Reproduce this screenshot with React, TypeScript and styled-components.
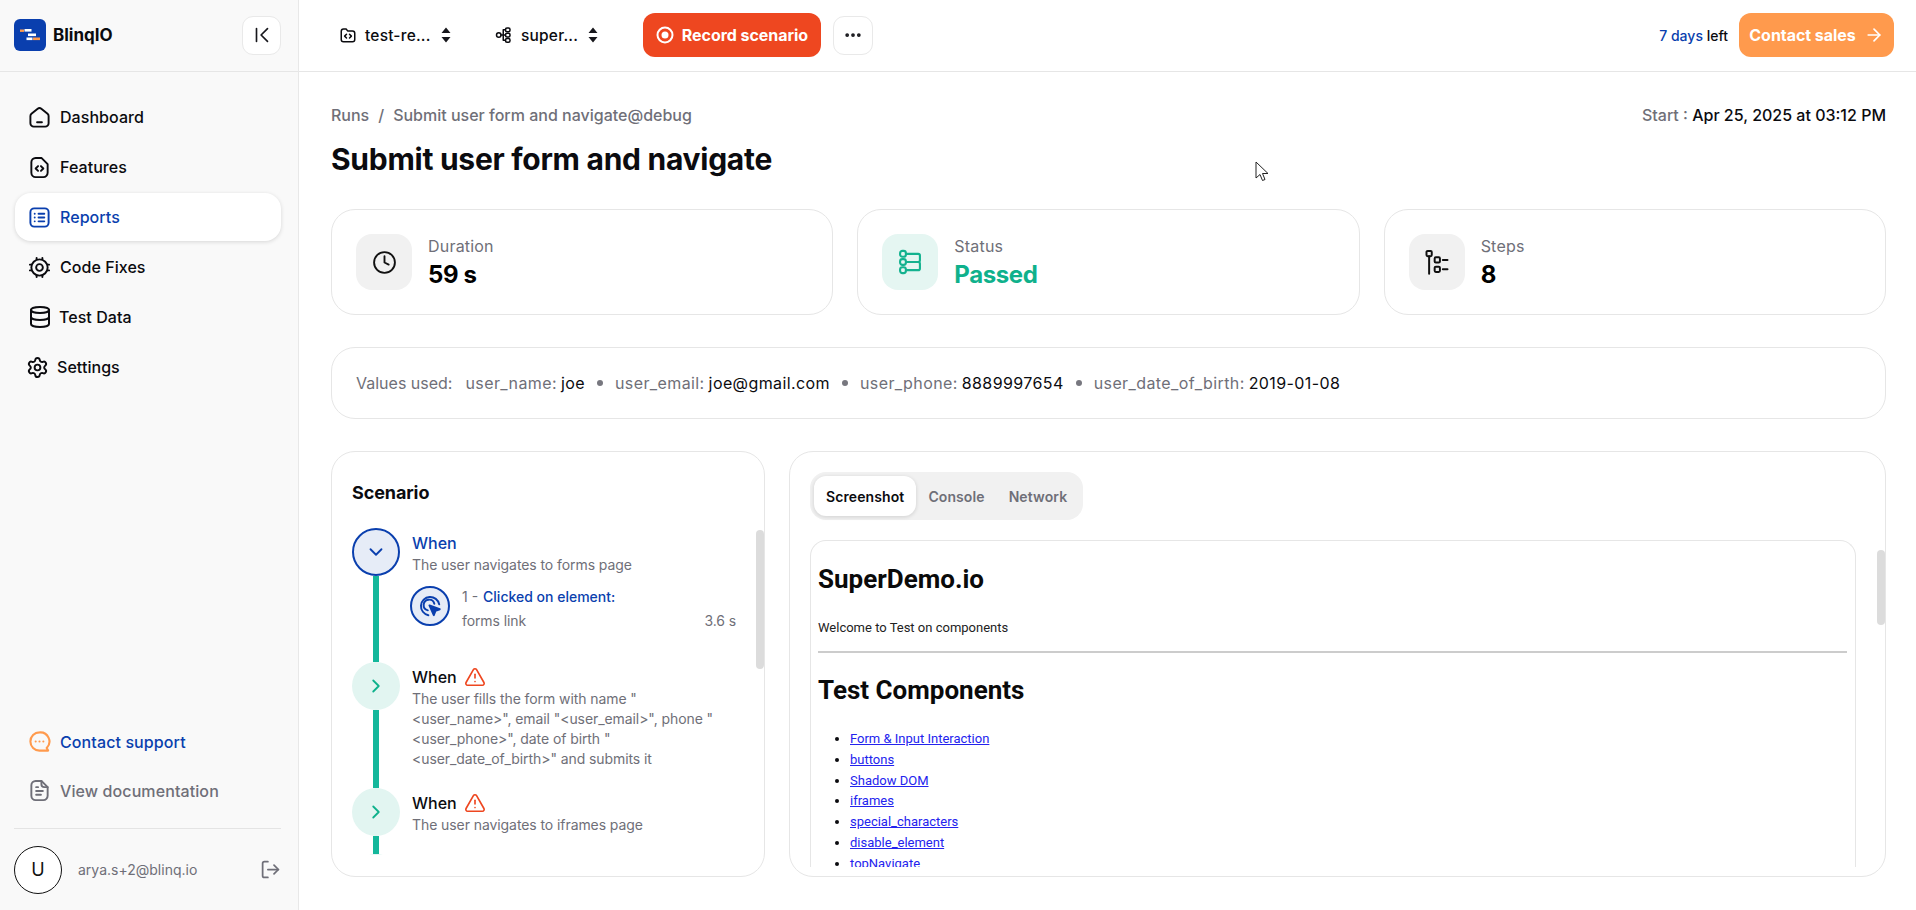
import * as React from 'react';
import styled, { createGlobalStyle } from 'styled-components';
import {
    ArrowRight,
    ChevronDown,
    ChevronRight,
    Clock,
    Database,
    Ellipsis,
    LogOut,
    Settings,
    TriangleAlert,
} from 'lucide-react';

const GlobalStyle = createGlobalStyle`
    html, body {
        margin: 0;
        padding: 0;
        height: 100%;
        overflow: hidden;
        background: #ffffff;
        font-family: Inter, "Open Sans", sans-serif;
        color: #0b0b0f;
    }
    * {
        box-sizing: border-box;
    }
`;

const Shell = styled.div`
    position: relative;
    display: grid;
    grid-template-columns: 299px 1fr;
    width: 1916px;
    height: 910px;
    overflow: hidden;
`;

const Sidebar = styled.aside`
    display: flex;
    flex-direction: column;
    height: 910px;
    background: #f9f9f9;
    border-right: 1px solid #e8e8e8;
`;

const SidebarTop = styled.div`
    display: flex;
    align-items: center;
    justify-content: space-between;
    height: 72px;
    padding: 0 17px 1px 14px;
    border-bottom: 1px solid #e6e6e6;
`;

const Brand = styled.div`
    display: flex;
    align-items: center;
    gap: 7px;
    font-size: 17px;
    font-weight: 700;
    letter-spacing: 0;
`;

const IconButton = styled.button<{ $w: number; $ml?: number }>`
    display: flex;
    align-items: center;
    justify-content: center;
    padding: 0;
    width: ${(p) => p.$w}px;
    height: 39px;
    margin-left: ${(p) => p.$ml ?? 0}px;
    background: #ffffff;
    border: 1px solid #e9e9e9;
    border-radius: 11px;
    color: #17171c;
`;

const Nav = styled.nav`
    display: flex;
    flex-direction: column;
    gap: 2px;
    padding: 21px 17px 0 15px;
`;

const NavItem = styled.div<{ $active?: boolean; $gap?: number; $inset?: number }>`
    display: flex;
    align-items: center;
    gap: ${(p) => p.$gap ?? 9}px;
    height: 48px;
    padding-left: ${(p) => p.$inset ?? 13}px;
    border-radius: 16px;
    font-size: 16px;
    font-weight: 500;
    letter-spacing: 0.05px;
    color: ${(p) => (p.$active ? '#0a3fae' : '#0b0b0f')};
    background: ${(p) => (p.$active ? '#ffffff' : 'transparent')};
    box-shadow: ${(p) => (p.$active ? '0 1px 4px rgba(0, 0, 0, 0.14)' : 'none')};
`;

const SidebarBottom = styled.div`
    margin-top: auto;
    padding: 0 17px 0 14px;
`;

const HelpLink = styled.div<{ $muted?: boolean }>`
    display: flex;
    align-items: center;
    gap: 9px;
    height: 49px;
    padding-left: 14px;
    font-size: 16px;
    font-weight: 500;
    letter-spacing: 0.1px;
    color: ${(p) => (p.$muted ? '#6f6f78' : '#0a3fae')};
`;

const UserRow = styled.div`
    display: flex;
    align-items: center;
    height: 82px;
    margin-top: 13px;
    padding-bottom: 17px;
    border-top: 1px solid #e4e4e4;
    padding-top: 17px;
    color: #6f6f78;
`;

const Avatar = styled.div`
    display: flex;
    align-items: center;
    justify-content: center;
    width: 48px;
    height: 48px;
    border: 1px solid #111111;
    border-radius: 50%;
    background: #ffffff;
    font-size: 18px;
    color: #111111;
`;

const UserMail = styled.span`
    flex: 1;
    margin-left: 16px;
    font-size: 14px;
`;

const Content = styled.div`
    display: flex;
    flex-direction: column;
    min-width: 0;
`;

const TopBar = styled.header`
    display: flex;
    align-items: center;
    height: 72px;
    padding: 0 22px 1px 40px;
    border-bottom: 1px solid #e6e6e6;
`;

const Pickers = styled.div`
    display: flex;
    gap: 43px;
    margin-right: 44px;
`;

const Picker = styled.div<{ $w: number }>`
    display: flex;
    align-items: center;
    gap: 8px;
    width: ${(p) => p.$w}px;
    font-size: 15.5px;
    font-weight: 500;
    letter-spacing: 0.2px;
`;

const PickerLabel = styled.span`
    flex: 1;
`;

const ActionButton = styled.button<{ $bg: string; $w: number }>`
    display: flex;
    align-items: center;
    justify-content: center;
    gap: 8px;
    width: ${(p) => p.$w}px;
    height: 44px;
    padding: 0;
    border: 0;
    border-radius: 12px;
    background: ${(p) => p.$bg};
    color: #ffffff;
    font-family: inherit;
    font-size: 16px;
    font-weight: 700;
    letter-spacing: -0.05px;
`;

const Trial = styled.span`
    margin-left: auto;
    margin-right: 11px;
    font-size: 14px;
    font-weight: 500;
    b {
        font-weight: 500;
        color: #0a3fae;
    }
`;

const Main = styled.main`
    display: flex;
    flex-direction: column;
    flex: 1;
    padding: 32px 30px 33px 32px;
    min-height: 0;
`;

const MetaRow = styled.div`
    display: flex;
    justify-content: space-between;
    align-items: center;
    height: 22px;
    font-size: 16px;
    font-weight: 500;
    color: #6f6f78;
    letter-spacing: 0;
`;

const Slash = styled.span`
    margin: 0 9px;
`;

const StartValue = styled.span`
    color: #0b0b0f;
`;

const Title = styled.h1`
    margin: 13px 0 0;
    height: 40px;
    font-size: 30px;
    line-height: 40px;
    font-weight: 700;
    letter-spacing: -0.27px;
`;

const Stats = styled.section`
    display: grid;
    grid-template-columns: repeat(3, 1fr);
    gap: 24px;
    margin-top: 30px;
`;

const Card = styled.div`
    background: #ffffff;
    border: 1px solid #e6e6e6;
    border-radius: 24px;
`;

const StatCard = styled(Card)`
    display: flex;
    align-items: center;
    gap: 16px;
    height: 106px;
    padding: 0 24px;
`;

const StatIcon = styled.div<{ $tint?: boolean }>`
    display: flex;
    align-items: center;
    justify-content: center;
    width: 56px;
    height: 56px;
    border-radius: 16px;
    background: ${(p) => (p.$tint ? '#e5f6f2' : '#f1f1f1')};
    color: ${(p) => (p.$tint ? '#13b28f' : '#111111')};
`;

const StatText = styled.div`
    display: flex;
    flex-direction: column;
    gap: 4px;
    padding-top: 1px;
`;

const StatLabel = styled.span`
    font-size: 16px;
    line-height: 20px;
    color: #6f6f78;
    letter-spacing: 0.2px;
`;

const StatValue = styled.span<{ $ok?: boolean }>`
    font-size: 24px;
    line-height: 30px;
    font-weight: 700;
    letter-spacing: -0.4px;
    color: ${(p) => (p.$ok ? '#0fb18c' : '#000000')};
`;

const ValuesCard = styled(Card)`
    display: flex;
    align-items: center;
    height: 72px;
    margin-top: 32px;
    padding: 0 24px;
    font-size: 16px;
    font-weight: 400;
    color: #6f6f78;
    letter-spacing: 0.4px;
`;

const ValuesLead = styled.span`
    margin-right: 13px;
    letter-spacing: 0;
`;

const ValueKey = styled.span`
    margin-right: 4px;
`;

const ValueText = styled.span`
    color: #0b0b0f;
`;

const Dot = styled.i`
    width: 6px;
    height: 6px;
    margin: 0 12px;
    border-radius: 50%;
    background: #77777f;
`;

const Panels = styled.section`
    display: grid;
    grid-template-columns: 434px 1fr;
    gap: 24px;
    flex: 1;
    margin-top: 32px;
    min-height: 0;
`;

const Panel = styled(Card)`
    position: relative;
    overflow: hidden;
    display: flex;
    flex-direction: column;
`;

const ScrollThumb = styled.div<{ $top: number; $h: number }>`
    position: absolute;
    right: 0;
    top: ${(p) => p.$top}px;
    width: 8px;
    height: ${(p) => p.$h}px;
    border-radius: 4px;
    background: #dcdcdc;
`;

const PanelTitle = styled.h2`
    margin: 29px 0 0 20px;
    height: 24px;
    font-size: 18px;
    line-height: 24px;
    font-weight: 700;
    letter-spacing: -0.1px;
`;

const Timeline = styled.div`
    flex: none;
    height: 327px;
    margin: 23px 0 0 20px;
    padding-right: 28px;
    overflow: hidden;
`;

const Phase = styled.div`
    display: grid;
    grid-template-columns: 48px 1fr;
    column-gap: 12px;
`;

const Rail = styled.div`
    display: flex;
    flex-direction: column;
    align-items: center;
`;

const RailLine = styled.div`
    flex: 1;
    width: 6px;
    background: #14b79b;
`;

const PhaseDot = styled.div<{ $open?: boolean }>`
    display: flex;
    align-items: center;
    justify-content: center;
    flex: none;
    width: 48px;
    height: 48px;
    border-radius: 50%;
    background: ${(p) => (p.$open ? '#e6ecf7' : '#e2f5f1')};
    border: ${(p) => (p.$open ? '2px solid #0a3fae' : '0')};
    color: ${(p) => (p.$open ? '#0a3fae' : '#0fb18c')};
`;

const PhaseBody = styled.div`
    padding: 5px 0 19px;
    min-width: 0;
`;

const PhaseHead = styled.div<{ $open?: boolean }>`
    display: flex;
    align-items: center;
    gap: 7px;
    height: 20px;
    font-size: 16px;
    font-weight: 500;
    color: ${(p) => (p.$open ? '#0a3fae' : '#0b0b0f')};
`;

const PhaseText = styled.p`
    margin: 2px 0 0;
    font-size: 14px;
    line-height: 20px;
    color: #6f6f78;
    letter-spacing: -0.08px;
`;

const Step = styled.div`
    display: grid;
    grid-template-columns: 40px 1fr;
    column-gap: 12px;
    margin: 11px 0 12px -2px;
`;

const StepBadge = styled.div`
    display: flex;
    align-items: center;
    justify-content: center;
    width: 40px;
    height: 40px;
    border-radius: 50%;
    border: 2px solid #0a3fae;
    background: #e6ecf7;
    color: #0a3fae;
`;

const StepTitle = styled.div`
    padding-top: 1px;
    font-size: 14px;
    line-height: 20px;
    color: #0a3fae;
    font-weight: 500;
    span {
        color: #6f6f78;
        font-weight: 400;
        margin-right: 5px;
    }
`;

const StepMeta = styled.div`
    display: flex;
    justify-content: space-between;
    margin-top: 4px;
    font-size: 14px;
    line-height: 20px;
    color: #6f6f78;
    letter-spacing: -0.1px;
`;

const Tabs = styled.div`
    display: flex;
    align-self: flex-start;
    height: 48px;
    margin: 20px 0 0 20px;
    padding: 4px;
    border-radius: 16px;
    background: #f1f1f1;
`;

const Tab = styled.div<{ $active?: boolean }>`
    display: flex;
    align-items: center;
    padding: 0 12px;
    border-radius: 12px;
    font-size: 14px;
    font-weight: 600;
    letter-spacing: 0.1px;
    color: ${(p) => (p.$active ? '#0b0b0f' : '#6f6f78')};
    background: ${(p) => (p.$active ? '#ffffff' : 'transparent')};
    box-shadow: ${(p) => (p.$active ? '0 1px 4px rgba(0, 0, 0, 0.14)' : 'none')};
`;

const Frame = styled.div`
    flex: none;
    height: 327px;
    margin: 20px 29px 0 20px;
    padding: 0 8px 0 7px;
    border: 1px solid #e6e6e6;
    border-bottom: 0;
    border-radius: 16px 16px 0 0;
    overflow: hidden;
    font-family: Roboto, sans-serif;
`;

const DemoHeading = styled.h3<{ $top: number }>`
    margin: ${(p) => p.$top}px 0 0;
    font-size: 26px;
    line-height: 32px;
    font-weight: 700;
    color: #0a0a0a;
`;

const DemoText = styled.p`
    margin: 24px 0 0;
    font-size: 13px;
    line-height: 18px;
    color: #222222;
`;

const DemoRule = styled.hr`
    margin: 14px 0 0;
    height: 2px;
    border: 0;
    background: #cccccc;
`;

const DemoList = styled.ul`
    margin: 23px 0 0;
    padding: 0 0 0 32px;
    font-size: 13px;
    line-height: 20.8px;
`;

const DemoLink = styled.a`
    color: #2323ee;
    text-decoration: underline;
`;

const Cursor = styled.svg`
    position: absolute;
    left: 1255px;
    top: 161px;
`;

const Logo = () => (
    <svg width="32" height="32" viewBox="0 0 32 32">
        <rect width="32" height="32" rx="6" fill="#0a3fae" />
        <rect x="6" y="10.5" width="4" height="2.4" fill="#ff9a4d" />
        <rect x="10.5" y="10" width="7" height="2.6" fill="#ffffff" />
        <rect x="14" y="14.5" width="8" height="2.6" fill="#ffffff" />
        <rect x="12.5" y="18.5" width="6" height="2.6" fill="#ffffff" />
        <rect x="19" y="18.5" width="7" height="2.6" fill="#ff9a4d" />
    </svg>
);

const Stroke = ({ size = 23, width = 2, children }: { size?: number; width?: number; children: React.ReactNode }) => (
    <svg width={size} height={size} viewBox="0 0 24 24" fill="none" stroke="currentColor" strokeWidth={width} strokeLinecap="round" strokeLinejoin="round">
        {children}
    </svg>
);

const HomeIcon = () => (
    <Stroke>
        <path d="M2.500 10.500a3 3 0 0 1 1.100-2.300l6.500-5.300a3 3 0 0 1 3.800 0l6.500 5.300a3 3 0 0 1 1.100 2.300V18a3.500 3.500 0 0 1-3.500 3.500H6A3.500 3.500 0 0 1 2.500 18z" />
        <path d="M9.500 17h5" />
    </Stroke>
);

const FileCodeIcon = () => (
    <Stroke>
        <path d="M14 2H8a4.500 4.500 0 0 0-4.500 4.500v11A4.500 4.500 0 0 0 8 22h8a4.500 4.500 0 0 0 4.500-4.500V8.500z" />
        <path d="m10.500 10.500-2.500 2.500 2.500 2.500M13.500 10.500l2.500 2.500-2.500 2.500" />
    </Stroke>
);

const ReportIcon = () => (
    <Stroke>
        <rect x="2.500" y="2.500" width="19" height="19" rx="4" />
        <path d="M7 8h.01M7 12h.01M7 16h.01M11 8h6M11 12h6M11 16h6" />
    </Stroke>
);

const ChipIcon = () => (
    <Stroke>
        <circle cx="12" cy="12" r="8.500" />
        <circle cx="12" cy="12" r="3.500" />
        <path d="M9 2v1.500M15 2v1.500M9 20.500V22M15 20.500V22M2 9h1.500M2 15h1.500M20.500 9H22M20.500 15H22" />
    </Stroke>
);

const ChatIcon = () => (
    <svg width="23" height="23" viewBox="0 0 24 24" fill="none" stroke="#ff9a4d" strokeWidth="2.2" strokeLinecap="round">
        <path d="M12 2.500a9.500 9.500 0 1 0 0 19h9l-1.500-2.800A9.500 9.500 0 0 0 12 2.500z" strokeLinejoin="round" />
        <path d="M8 12h.01M12 12h.01M16 12h.01" />
    </svg>
);

const DocIcon = () => (
    <Stroke>
        <path d="M14 2H8a4.500 4.500 0 0 0-4.500 4.500v11A4.500 4.500 0 0 0 8 22h8a4.500 4.500 0 0 0 4.500-4.500V8.500z" />
        <path d="M14 2v3.500a3 3 0 0 0 3 3h3.500M8.500 12.500h7M8.500 16.500h5M8.500 8.500h2" />
    </Stroke>
);

const CollapseIcon = () => (
    <Stroke size={22} width={1.8}>
        <path d="M6 5v14M18 5l-7 7 7 7" />
    </Stroke>
);

const RepoIcon = () => (
    <Stroke size={18}>
        <path d="M3 7a3 3 0 0 1 3-3h3.500l2 2.500H18a3 3 0 0 1 3 3V18a3 3 0 0 1-3 3H6a3 3 0 0 1-3-3z" />
        <path d="m10 11-2.500 2.500 2.500 2.500M14 11l2.500 2.500-2.500 2.500" />
    </Stroke>
);

const FlowIcon = () => (
    <Stroke size={18}>
        <circle cx="5" cy="12" r="3" />
        <rect x="14" y="2.500" width="6" height="5" rx="2" />
        <rect x="14" y="9.500" width="6" height="5" rx="2" />
        <rect x="14" y="16.500" width="6" height="5" rx="2" />
        <path d="M8 12h6M11 12V5h3M11 12v7h3" />
    </Stroke>
);

const SortIcon = () => (
    <svg width="12" height="18" viewBox="0 0 12 18" fill="#17171c">
        <path d="M6 1.500 10.500 7h-9zM6 16.500 1.500 11h9z" />
    </svg>
);

const RecordIcon = () => (
    <svg width="18" height="18" viewBox="0 0 18 18">
        <circle cx="9" cy="9" r="7.500" fill="none" stroke="#ffffff" strokeWidth="2" />
        <circle cx="9" cy="9" r="3.500" fill="#ffffff" />
    </svg>
);

const StatusIcon = () => (
    <Stroke size={28} width={1.8}>
        <rect x="3.500" y="2.500" width="5" height="5" rx="2" />
        <rect x="3.500" y="9.500" width="5" height="5" rx="2" />
        <rect x="3.500" y="16.500" width="5" height="5" rx="2" />
        <path d="M8.500 5H19a1.500 1.500 0 0 1 1.500 1.500v4A1.500 1.500 0 0 1 19 12H8.500M19 12a1.500 1.500 0 0 1 1.500 1.500v4A1.500 1.500 0 0 1 19 19H8.500" />
    </Stroke>
);

const StepsIcon = () => (
    <Stroke size={28} width={1.7}>
        <rect x="3" y="2.500" width="4.500" height="4.500" rx="1" />
        <path d="M5.250 7v15" />
        <rect x="10" y="8" width="4.500" height="4.500" rx="1" />
        <rect x="10" y="16" width="4.500" height="4.500" rx="1" />
        <path d="M17 10.250h4M17 18.250h4" />
    </Stroke>
);

const ClickIcon = () => (
    <svg width="26" height="26" viewBox="0 0 24 24" fill="none" stroke="currentColor" strokeWidth="1.8" strokeLinecap="round">
        <path d="M20.500 10.500A8.500 8.500 0 1 0 10.500 20.500" />
        <path d="M16 10a5 5 0 1 0-6 6" />
        <path d="m11.500 11.500 9.500 3.500-4 1.500-1.500 4z" fill="currentColor" strokeLinejoin="round" />
    </svg>
);

const links = ['Form & Input Interaction', 'buttons', 'Shadow DOM', 'iframes', 'special_characters', 'disable_element', 'topNavigate'];

const values = [
    { key: 'user_name:', value: 'joe' },
    { key: 'user_email:', value: 'joe@gmail.com' },
    { key: 'user_phone:', value: '8889997654' },
    { key: 'user_date_of_birth:', value: '2019-01-08' },
];

export default function App() {
    return (
        <Shell>
            <GlobalStyle />
            <Sidebar>
                <SidebarTop>
                    <Brand>
                        <Logo />
                        BlinqIO
                    </Brand>
                    <IconButton $w={39}>
                        <CollapseIcon />
                    </IconButton>
                </SidebarTop>
                <Nav>
                    <NavItem><HomeIcon />Dashboard</NavItem>
                    <NavItem><FileCodeIcon />Features</NavItem>
                    <NavItem $active><ReportIcon />Reports</NavItem>
                    <NavItem><ChipIcon />Code Fixes</NavItem>
                    <NavItem $gap={7}><Database size={24} strokeWidth={2} />Test Data</NavItem>
                    <NavItem $gap={8} $inset={11}><Settings size={23} strokeWidth={2} />Settings</NavItem>
                </Nav>
                <SidebarBottom>
                    <HelpLink><ChatIcon />Contact support</HelpLink>
                    <HelpLink $muted><DocIcon />View documentation</HelpLink>
                    <UserRow>
                        <Avatar>U</Avatar>
                        <UserMail>arya.s+2@blinq.io</UserMail>
                        <LogOut size={21} strokeWidth={2} />
                    </UserRow>
                </SidebarBottom>
            </Sidebar>
            <Content>
                <TopBar>
                    <Pickers>
                        <Picker $w={113}>
                            <RepoIcon />
                            <PickerLabel>test-re...</PickerLabel>
                            <SortIcon />
                        </Picker>
                        <Picker $w={104}>
                            <FlowIcon />
                            <PickerLabel>super...</PickerLabel>
                            <SortIcon />
                        </Picker>
                    </Pickers>
                    <ActionButton $bg="#ee4720" $w={178}>
                        <RecordIcon />
                        Record scenario
                    </ActionButton>
                    <IconButton $w={40} $ml={12}>
                        <Ellipsis size={20} strokeWidth={2.5} />
                    </IconButton>
                    <Trial><b>7 days</b> left</Trial>
                    <ActionButton $bg="#ff9a4d" $w={155}>
                        Contact sales
                        <ArrowRight size={20} strokeWidth={2} />
                    </ActionButton>
                </TopBar>
                <Main>
                    <MetaRow>
                        <span>Runs<Slash>/</Slash>Submit user form and navigate@debug</span>
                        <span>Start : <StartValue>Apr 25, 2025 at 03:12 PM</StartValue></span>
                    </MetaRow>
                    <Title>Submit user form and navigate</Title>
                    <Stats>
                        <StatCard>
                            <StatIcon><Clock size={25} strokeWidth={1.8} /></StatIcon>
                            <StatText>
                                <StatLabel>Duration</StatLabel>
                                <StatValue>59 s</StatValue>
                            </StatText>
                        </StatCard>
                        <StatCard>
                            <StatIcon $tint><StatusIcon /></StatIcon>
                            <StatText>
                                <StatLabel>Status</StatLabel>
                                <StatValue $ok>Passed</StatValue>
                            </StatText>
                        </StatCard>
                        <StatCard>
                            <StatIcon><StepsIcon /></StatIcon>
                            <StatText>
                                <StatLabel>Steps</StatLabel>
                                <StatValue>8</StatValue>
                            </StatText>
                        </StatCard>
                    </Stats>
                    <ValuesCard>
                        <ValuesLead>Values used:</ValuesLead>
                        {values.map((v, i) => (
                            <React.Fragment key={v.key}>
                                {i > 0 && <Dot />}
                                <ValueKey>{v.key}</ValueKey>
                                <ValueText>{v.value}</ValueText>
                            </React.Fragment>
                        ))}
                    </ValuesCard>
                    <Panels>
                        <Panel>
                            <PanelTitle>Scenario</PanelTitle>
                            <Timeline>
                                <Phase>
                                    <Rail>
                                        <PhaseDot $open><ChevronDown size={22} strokeWidth={2} /></PhaseDot>
                                        <RailLine />
                                    </Rail>
                                    <PhaseBody>
                                        <PhaseHead $open>When</PhaseHead>
                                        <PhaseText>The user navigates to forms page</PhaseText>
                                        <Step>
                                            <StepBadge><ClickIcon /></StepBadge>
                                            <div>
                                                <StepTitle><span>1 -</span>Clicked on element:</StepTitle>
                                                <StepMeta><span>forms link</span><span>3.6 s</span></StepMeta>
                                            </div>
                                        </Step>
                                    </PhaseBody>
                                </Phase>
                                <Phase>
                                    <Rail>
                                        <PhaseDot><ChevronRight size={22} strokeWidth={2} /></PhaseDot>
                                        <RailLine />
                                    </Rail>
                                    <PhaseBody>
                                        <PhaseHead>When <TriangleAlert size={22} color="#ee4720" strokeWidth={1.8} /></PhaseHead>
                                        <PhaseText>
                                            The user fills the form with name "<br />
                                            &lt;user_name&gt;", email "&lt;user_email&gt;", phone "<br />
                                            &lt;user_phone&gt;", date of birth "<br />
                                            &lt;user_date_of_birth&gt;" and submits it
                                        </PhaseText>
                                    </PhaseBody>
                                </Phase>
                                <Phase>
                                    <Rail>
                                        <PhaseDot><ChevronRight size={22} strokeWidth={2} /></PhaseDot>
                                        <RailLine />
                                    </Rail>
                                    <PhaseBody>
                                        <PhaseHead>When <TriangleAlert size={22} color="#ee4720" strokeWidth={1.8} /></PhaseHead>
                                        <PhaseText>The user navigates to iframes page</PhaseText>
                                    </PhaseBody>
                                </Phase>
                                <Phase>
                                    <Rail><PhaseDot /></Rail>
                                </Phase>
                            </Timeline>
                            <ScrollThumb $top={78} $h={139} />
                        </Panel>
                        <Panel>
                            <Tabs>
                                <Tab $active>Screenshot</Tab>
                                <Tab>Console</Tab>
                                <Tab>Network</Tab>
                            </Tabs>
                            <Frame>
                                <DemoHeading $top={22}>SuperDemo.io</DemoHeading>
                                <DemoText>Welcome to Test on components</DemoText>
                                <DemoRule />
                                <DemoHeading $top={21}>Test Components</DemoHeading>
                                <DemoList>
                                    {links.map((l) => (
                                        <li key={l}><DemoLink>{l}</DemoLink></li>
                                    ))}
                                </DemoList>
                            </Frame>
                            <ScrollThumb $top={98} $h={75} />
                        </Panel>
                    </Panels>
                </Main>
            </Content>
            <Cursor width="14" height="22" viewBox="0 0 14 22">
                <path d="M1 1v16l4-3.500 2.500 6 2.500-1-2.500-6H13z" fill="#ffffff" stroke="#222222" strokeWidth="1" strokeLinejoin="round" />
            </Cursor>
        </Shell>
    );
}
